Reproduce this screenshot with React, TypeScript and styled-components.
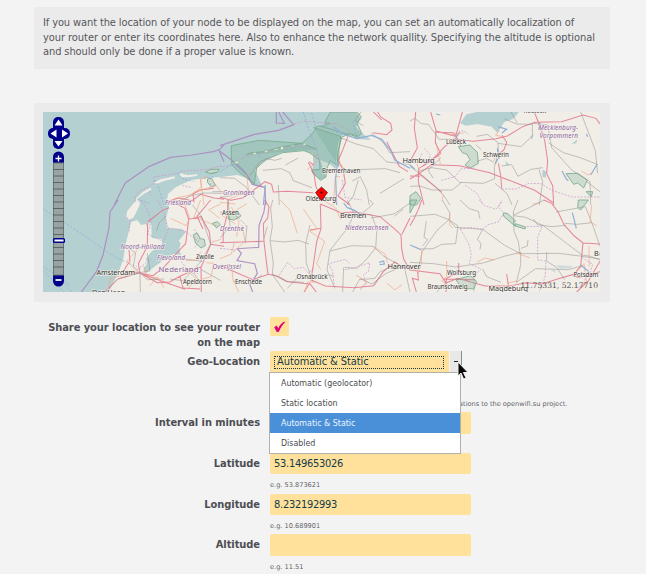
import React from "react";
import styled, { createGlobalStyle } from "styled-components";

const GlobalStyle = createGlobalStyle`
  * { box-sizing: border-box; }
  html, body { margin: 0; padding: 0; background: #f3f3f3; }
  body { width: 646px; height: 574px; overflow: hidden; color: #4d4e53;
    font-family: "DejaVu Sans Condensed", "DejaVu Sans", sans-serif; font-stretch: condensed; }
`;

const Page = styled.main`
  display: flex; flex-direction: column; width: 646px; height: 574px; padding: 7px 36px 0 34px; overflow: hidden;
`;
const Notice = styled.p`
  flex: none; margin: 0; height: 62px; padding: 9px 9px; background: #ebebeb; color: #56575b;
  font-size: 11px; line-height: 14.6px; white-space: nowrap;
`;
const NoticeLine = styled.span<{ $spacing?: number }>`
  display: block; letter-spacing: ${p => p.$spacing ?? -0.06}px;
`;
const MapPanel = styled.section`
  flex: none; margin-top: 34px; height: 199px; padding: 9px; background: #ebebeb;
`;
const MapCanvas = styled.svg` display: block; width: 557px; height: 180px; `;
const Form = styled.form` flex: none; margin-top: 15px; display: flex; flex-direction: column; `;
const Row = styled.div<{ $height: number }>`
  flex: none; display: grid; grid-template-columns: 226px 1fr; column-gap: 10px; height: ${p => p.$height}px;
`;
const Label = styled.label`
  padding-top: 3px; text-align: right; font-weight: bold; font-size: 11px; line-height: 15px;
  letter-spacing: -0.06px; white-space: nowrap;
`;
const Field = styled.div` position: relative; display: flex; flex-direction: column; `;
const Check = styled.div`
  width: 19px; height: 19px; border-radius: 2px; background: #ffe19b; display: grid; place-items: center;
`;
const Input = styled.div<{ $height?: number }>`
  width: 201px; height: ${p => p.$height ?? 21}px; border-radius: 2px; background: #ffe19b;
  padding-left: 4px; color: #123b49; font-size: 11px; line-height: 21px; letter-spacing: -0.28px;
`;
const Hint = styled.span<{ $top?: number; $left?: number }>`
  margin: ${p => p.$top ?? 7}px 0 0 ${p => p.$left ?? 0}px; font-family: "DejaVu Sans", sans-serif;
  font-stretch: normal; font-size: 6.6px; line-height: 9px; color: #626367; white-space: nowrap;
`;
const Select = styled.div` display: flex; width: 192px; height: 21px; gap: 1px; `;
const SelectValue = styled.div`
  width: 179px; background: #ffe19b; border-radius: 2px 0 0 0; padding: 5px 5px 3px 4px;
`;
const FocusText = styled.div`
  height: 13px; border: 1px dotted #123b49; padding-left: 2px; font-size: 11px; letter-spacing: -0.08px;
  line-height: 10px; color: #123b49; white-space: nowrap;
`;
const SelectButton = styled.div`
  width: 12px; background: #e8e8e8; border-right: 1px solid #8d8d8d; display: flex; align-items: center; padding-left: 4px;
  &::before { content: ""; width: 4px; height: 1px; background: #222; }
`;
const Menu = styled.ul`
  position: absolute; z-index: 2; left: -1px; top: 21px; width: 192px; height: 82px; margin: 0; padding: 0;
  border: 1px solid #b1b1ab; background: white; list-style: none;
`;
const Option = styled.li<{ $selected?: boolean }>`
  height: 20px; padding-left: 11px; font-size: 8.8px; line-height: 20px;
  color: ${p => (p.$selected ? "#edf5fc" : "#4b4c50")}; background: ${p => (p.$selected ? "#4a90d9" : "transparent")};
`;
const Cursor = styled.svg` position: absolute; z-index: 3; left: 186px; top: 10px; `;

type Frame = { x: number; y: number; children: React.ReactNode };
const Tile = ({ x, y, children }: Frame) => <g transform={`translate(${x} ${y}) scale(.33333)`}>{children}</g>;

const Red = styled.path` fill: none; stroke: #e4748b; stroke-width: 3.1; opacity: .85; `;
const Gray = styled.path` fill: none; stroke: #8e8b89; stroke-width: 2; opacity: .75; `;
const Orange = styled.path` fill: none; stroke: #efa583; stroke-width: 2.6; opacity: .75; `;
const Border = styled.path` fill: none; stroke: #a98bc1; stroke-width: 3.6; opacity: .9; `;
const Dashed = styled.path` fill: none; stroke: #c896cc; stroke-width: 2.7; stroke-dasharray: 6 4; opacity: .8; `;
const Ferry = styled.path` fill: none; stroke: #869fe0; stroke-width: 2.5; stroke-dasharray: 6 5; opacity: .75; `;
const Water = styled.path` fill: #b5d0d0; `;
const Stream = styled.path` fill: none; stroke: #91afd5; stroke-width: 3.6; `;
const Land = styled.path` fill: #f1eee8; `;
const Reserve = styled.path` fill: #70aa90; fill-opacity: .27; stroke: #79ad8d; stroke-width: 2.6; `;
const Place = styled.text<{ $size?: number }>`
  font-family: "Noto Sans", sans-serif; font-stretch: normal; font-size: ${p => p.$size ?? 6.3}px; fill: #363636;
  stroke: #f5f2ec; stroke-width: 1.3px; paint-order: stroke; stroke-opacity: .75;
`;
const Region = styled(Place)` fill: #8c63a1; font-style: italic; `;
const Country = styled(Place)` fill: #8c63a1; `;
const Coordinates = styled.text` font-family: "DejaVu Serif", serif; font-stretch: normal; font-size: 7.6px; fill: #505050; `;

const places: [string, number, number, number, number][] = [
  ["Oldenburg", 305.5, 201.4, 30.5, 6.3], ["Bremerhaven", 322, 172.7, 38.5, 6.3],
  ["Hamburg", 402.5, 162.8, 32, 7.5], ["Lübeck", 446, 144.2, 20, 6.3], ["Schwerin", 483, 156.5, 26, 6.3],
  ["Rostock", 523.5, 113, 22.5, 6.3], ["Assen", 222, 214.5, 17, 6.3], ["Zwolle", 196, 258.5, 18, 6.3],
  ["Amsterdam", 96.5, 274.7, 38.5, 7.3], ["Den Haag", 92, 294.7, 33, 7.3], ["Apeldoorn", 183, 284, 29, 6.3],
  ["Enschede", 235, 283.5, 27, 6.3], ["Osnabrück", 296.5, 279.3, 31, 6.3], ["Bremen", 340, 217.5, 26.5, 7.5],
  ["Hannover", 387.5, 269.2, 33, 7.5], ["Wolfsburg", 447, 275, 29, 6.3], ["Braunschweig", 427.5, 289, 40, 6.3],
  ["Magdeburg", 488.5, 290.7, 39.5, 7.3], ["Potsdam", 573.5, 276.6, 25, 6.3], ["Berlin", 594, 256, 23, 7.3],
];
const regions: [string, number, number, number, number][] = [
  ["Groningen", 223, 195, 31.5, 6.5], ["Friesland", 165, 204.5, 26, 6.5], ["Drenthe", 220, 231.3, 24, 6.5],
  ["Noord-Holland", 120.5, 248.9, 44, 6.5], ["Flevoland", 157, 259.6, 28, 6.5], ["Overijssel", 212.5, 268.8, 28.5, 6.5],
  ["Niedersachsen", 345, 229.8, 43.5, 6.5], ["Mecklenburg-", 538.5, 129.7, 39.5, 6.5], ["Vorpommern", 539.5, 138.2, 38.5, 6.5],
];

const RegionMap = () => (
  <MapCanvas viewBox="43 112 557 180" role="img" aria-label="Map">
    <rect x="43" y="112" width="557" height="180" fill="#b5d0d0" />
    <Land d="M109 292L119 271 123 260 126 243 131 222 137 220 141 225 146 224 149 238 161 240 163 243 151 252 146 259 149 268 160 263 165 253 181 255 177 243 186 232 181 229 167 228 166 218 169 207 167 200 168 194 176 187 191 180 207 178 221 177 237 175 247 178 253 185 263 188 258 177 255 170 260 164 269 159 280 153 303 150 313 154 313 164 312 173 320 180 326 177 323 168 320 160 328 163 337 170 336 162 338 143 342 135 350 134 357 139 371 140 362 133 356 127 361 119 356 112H600V292Z" />
    <Tile x={34} y={100}>
      <Land d="M302 315L307 294 327 275 350 263 352 270 330 281 314 293ZM360 248L380 238 422 229 423 235 390 243 367 252ZM438 220L460 225 490 223 489 228 461 232 439 231ZM520 212L556 208 557 212 523 219Z" />
      <Reserve d="M515 216L530 208 556 208 550 217 530 221ZM520 237L533 235 545 257 532 260 521 248Z" />
      <Border d="M241 315L258 280 274 249 346 199 410 172 474 165 538 155 558 148 570 134M554 149L570 185" />
      <Dashed d="M302 315L304 289 318 273 361 250 358 231 432 220 436 214 518 209 556 198 570 201M346 272L349 286M445 256L475 263" />
      <Ferry d="M310 298L345 310M362 240L374 262 390 315M430 219L448 238 480 244M529 250L527 270M510 235L540 230" />
      <Red d="M395 305L435 294 474 302 500 283 540 294 570 298M480 307L477 282 499 270 540 265" />
      <Orange d="M415 315L422 295 474 284 501 262 500 238 522 230M450 302L480 276 540 259M500 238L510 315M535 240L560 275" />
      <Gray d="M400 308L442 300 472 287 510 279 565 280M535 275L570 275" />
    </Tile>
    <Tile x={220} y={100}>
      <Reserve d="M34 137L118 121 246 130 278 100 290 79 310 78 330 70 313 69 331 36H412L424 51 411 68 425 100 416 108 388 101 365 112 353 161 352 196 330 182 321 205 318 231 302 241 278 219 275 210 300 208 299 181 270 159 252 152 188 158 139 178 110 204 103 252 53 213 34 192Z" />
      <Reserve d="M280 82L363 110 357 145 356 200M302 79L420 113M36 183L68 208 102 254M78 165L90 159 133 155 180 142 245 130 291 148" />
      <Border d="M0 137L103 103 176 91 221 74 188 36M169 36V69L193 70 176 36M0 154L50 192 80 222 96 253 135 262 137 315" />
      <Dashed d="M214 75L250 64 356 72 390 94M0 199L34 197 54 180 89 166 246 136 286 151" />
      <Ferry d="M250 36L267 92 291 147 300 204M275 40L291 92M0 215L39 192 75 218M310 74L365 105M398 64L410 108M118 172L120 155" />
      <Red d="M473 36L482 51 512 70 516 90 500 104 460 98M385 106L370 145 355 181 370 212 376 250 354 288 390 315M265 187L282 221 287 257 303 295M0 292L33 301 70 293 135 245 155 253 160 276 200 274 280 278M280 195L268 185M500 125L538 199 564 215M460 36L485 60" />
      <Orange d="M260 210L288 188 288 160M80 222L85 268 65 284M340 315L346 230 360 230M26 298L91 270M0 307L46 312M359 190L374 206" />
      <Gray d="M0 233L44 235 80 263 118 315M90 226L120 185 140 176 165 181 185 175M129 211L184 206 209 218 220 242 276 263M196 195L235 174M360 112L405 131 460 146 500 186 570 193M453 98L490 128 509 158 570 155M409 209L496 206 540 218M397 243L421 230 440 270 448 315M380 315L400 288 415 240M480 280L552 236M175 255L178 315M0 292L37 287M423 36L404 61 430 77" />
      <Stream d="M340 80L368 101 410 116 455 106 485 118 511 151 525 181 570 205M353 186L347 235 350 315M136 255L130 315" />
      <Dashed d="M367 240L375 292 425 300" />
      <g fill="#e2ead9" stroke="#8bb599" strokeWidth="2"><path d="M42 185l12-2 5 5-12 4zM96 161l8-4 8 4-7 4zM133 153l12-3-2 7-10 1zM160 149l16-5-3 6-13 3zM181 141l9-3 1 10-9 3zM212 136l11-1-3 7zM248 131l9-3 2 6-8 3z" /></g>
    </Tile>
    <Tile x={410} y={100}>
      <Water d="M150 70L169 43 200 36H327L309 57 282 67 263 99 245 80 202 72 168 77Z" />
      <Water d="M398 209L410 215 407 233 397 230ZM485 132L502 118 499 130ZM361 110L371 103 366 119ZM287 183L298 194 288 196Z" />
      <Stream d="M152 139L139 110 149 98M256 191L263 177M262 145L267 177M456 213L469 237 475 242M542 225L560 195M15 208L0 195M78 42L91 45M529 102L533 110M264 80L290 88 276 99M390 68L386 90" />
      <Reserve d="M145 140L180 135 202 157 205 190 181 204 165 195 180 179 171 163 157 158ZM468 221L503 220 532 240 521 264 503 249 491 253ZM0 287L18 275 33 295 20 315H0ZM528 275L548 275 544 290Z" />
      <Red d="M17 36L13 84 22 144 0 184M62 36L78 91 76 128 92 160 61 185 27 205M157 36L137 109 80 94M140 110L129 98 75 97M139 113L104 140 75 171 36 199M137 118L190 124 258 116 292 108 338 80 375 67 455 65 519 45 558 55 570 72M373 36L386 69 404 121 413 183 410 221 428 257 431 315M0 237L25 222 65 194 147 197 191 207 239 218 311 246 374 271 431 309M265 190L272 225 275 265M276 106L290 127 282 149 268 162M26 205L25 246 42 315M26 220L96 277M0 228L30 229" />
      <Gray d="M0 63L14 55 35 71 55 73 88 118 140 118M200 109L232 103 264 128 265 161 253 200 254 236 220 250 149 247 110 210 65 203 30 212M264 130L333 140 367 108 367 73 320 72 284 57M201 184L230 175 251 187M303 36L321 68M369 70L413 75 425 143 485 210 540 245 542 315M416 129L460 158 513 174 564 194M512 36L556 152 563 220M387 208L398 245 388 315M275 198L305 194 324 229 363 208 398 203M255 250L291 281 306 315M0 199L42 230 83 266 105 292 120 315M0 259L29 258 66 270 127 270 155 247M93 173L54 211 70 235M529 244L570 275M197 134L214 149" />
      <Orange d="M78 128L91 192M119 105L162 98M278 110L257 106 267 91M251 183L256 174M101 283L95 303M19 187L29 216M514 213L533 225 548 218M367 313L387 308" />
      <Dashed d="M36 160L27 178 55 185 61 165 42 144M94 241L135 230 153 207 195 204M166 256L202 281 219 315M275 267L320 267 357 250 393 251 425 271 486 291 570 291M135 99L158 92 174 101" />
    </Tile>
    <Tile x={34} y={200}>
      <Land d="M277 49L280 33 300 8 313 0 318 12 309 32 298 53 283 61Z" />
      <Water d="M340 77L365 70 397 81 394 98 424 110 440 130 434 155 395 173 357 204 333 220 328 207 350 175 379 149 384 127 367 111 348 100Z" />
      <Land d="M365 208L381 187 413 180 458 182 484 195 446 213 403 220ZM340 66L352 72 353 113 382 117 385 129 355 130 336 110Z" />
      <Border d="M252 0L228 36 225 84 207 165 188 214 142 276" />
      <Ferry d="M26 25L145 103 242 171 308 200M26 199L66 224 113 275M26 211L90 276M66 222L110 258" />
      <Dashed d="M320 0L337 23 351 65 341 102 389 125 403 87 390 40 371 0M279 53L288 60 285 99M403 84L451 92 493 124M481 88L498 112 483 143M442 185L461 210 491 220M309 209L352 177" />
      <Red d="M341 68L340 139 313 191 318 219 269 212 288 182 285 150M341 66L385 31 405 23M318 218L250 238 213 276M318 219L370 248 407 246 438 229 502 200 530 133 526 95 501 50 464 58 455 131 431 156 390 201 357 227 316 219M464 58L453 25 416 6M530 133L570 139M530 0L489 49 507 87M501 200L502 276M438 230L447 264 499 267M318 219L380 242 453 268" />
      <Gray d="M285 145L305 159 298 199 318 218 340 239 391 237M252 236L318 218 319 276M340 160L348 213 316 218M368 92L376 67 395 49M475 15L502 48 530 133 499 187 447 242 408 237M451 177L505 184M446 208L481 221 499 248M500 208L559 241" />
      <Orange d="M316 144L278 183 310 216 230 235 220 276M329 199L340 230 372 233 390 263M370 230L347 258M410 55L457 77 467 55 448 0M500 0L480 51 550 79M500 155L488 180 457 182M560 12L524 29 557 55M517 188L538 190 532 230 490 241M454 206L487 237 463 265M530 128L561 118" />
      <Reserve d="M478 104L489 99 499 116 511 118 514 137 501 144 485 130ZM535 70L550 65 559 74 548 84Z" />
    </Tile>
    <Tile x={220} y={200}>
      <Red d="M0 128L130 124M24 0L22 42 10 90 9 128M134 0L147 20 143 54 130 71 132 125 139 184 144 222M301 13L303 86 290 125 282 182 273 240 316 258 402 263 461 257 490 215 524 186 557 207M301 12L363 38 404 36 480 50 522 85 543 105 545 146 551 177 570 211M546 103L570 54M0 196L45 216 99 239 145 223 174 229 202 245 269 252M252 276L269 250 289 276M303 85L270 90" />
      <Gray d="M25 0L30 80 0 114M158 0L152 25 157 80 150 120 160 189 157 223M156 222L198 244 252 247M157 223L194 276M151 122L192 126 235 121 267 132M270 75L257 131 259 190 278 245M404 39L383 84 330 151 321 210 345 265M330 153L395 137 459 139 492 169 540 196M319 223L341 228M374 202L410 205 438 180 467 143 471 87 454 44 410 42M368 276L371 202M398 276L420 236 456 252 497 221 552 197 570 276M454 54L522 42 570 9M421 239L465 235 478 217 512 200M202 265L241 224 275 236M81 77L76 130M142 80L132 115M100 245L125 225M40 243L92 253M400 37L382 0M422 44L460 12 450 0M550 27L523 49" />
      <Border d="M137 0L132 35 117 77 116 142 52 146 64 160 51 182 104 191 112 220 90 255 98 276" />
      <Orange d="M34 21L57 65 50 110M0 176L34 162 44 124M181 0L210 31 232 100M250 27L292 87 268 93 314 124 290 191 303 209M310 0L347 24 362 59M460 139L495 162 503 188M66 76L75 123 40 157M35 201L39 240 56 276M255 276L263 246 292 246M408 226L442 245 420 265M500 249L525 270 546 254M80 11L39 37M0 42L46 72" />
      <Dashed d="M0 36L46 43 83 82M0 145L45 150M178 225L203 187 223 206 250 202 265 220 285 202M342 253L337 212 326 191 375 178 388 190M374 209L397 205 449 188 446 214 430 225 438 253 420 269" />
      <Stream d="M477 187l14-4 2 9-14 2M371 10L382 23 404 31 427 48" />
      <Reserve d="M25 35L57 40 63 48 42 60 25 57Z" />
    </Tile>
    <Tile x={410} y={200}>
      <Red d="M0 210L90 221 108 249 143 235 225 258 300 258 348 248 397 252 440 238 488 224 504 233 570 215M23 213L25 240 7 235 19 276M35 0L25 29 12 56 0 77M401 0L425 10 444 35 462 74 493 108 519 129 570 132M519 129L512 198 489 226M146 189L146 214 109 236 108 276M570 184L535 243 500 276M290 222L296 262M100 237L195 239" />
      <Gray d="M24 210L37 154 81 91 117 59 120 40 97 0M0 49L75 43 117 59 136 82 218 88 284 136 332 161 445 160 510 168 570 177M118 60L144 78 137 131 96 133 69 146 36 147M218 89L202 118 213 131 210 148M150 0L178 26 205 34 210 56M0 187L70 191 137 201 220 189 282 169 332 157 332 195 319 248M330 160L325 125 312 94 310 35 324 0M311 45L358 23 402 0M311 47L347 52 400 77 470 130 516 165 541 169 570 180M370 57L382 74 426 80 467 76M438 36L526 20 546 69 570 139M546 68L501 73 464 70M410 157L410 184 440 202 464 239M319 247L377 206 475 209 517 197M354 120L352 138 333 145M49 63L42 112 53 119 38 138M109 247L80 276M218 207L230 230 273 247" />
      <Orange d="M119 40L119 75 129 85M35 144L34 190 25 220M318 158L360 174M545 16L540 65 560 77M110 183L110 230 95 242 113 256M252 180L225 174 200 187M500 215L522 191 529 245 504 264M320 243L291 250M537 138L538 200" />
      <Dashed d="M208 0L224 17 258 28 276 5M218 88L234 74 265 66 281 39 265 20 276 0M150 86L182 82 216 88M151 87L176 131 184 163 178 191 213 207 192 229 192 276M350 80L397 79 383 110 383 180 408 183 405 232 388 276M515 172L548 193 540 220 523 241" />
      <Reserve d="M281 39L292 40 317 63 310 68 316 79 280 48ZM316 71L347 81 345 87 316 78ZM138 239L181 227 200 244 192 267 154 264ZM505 0L535 0 512 30 503 22ZM0 0L21 0 0 39Z" />
      <Stream d="M487 38L499 85M0 135L33 149M512 195L537 215" />
      <Water d="M423 211l14-5-2 12zM439 196l50 2-10 7-29 1z" opacity=".6" />
    </Tile>
    {places.map(([name, x, y, width, size]) => <Place key={name} x={x} y={y} textLength={width} $size={size}>{name}</Place>)}
    {regions.map(([name, x, y, width, size]) => <Region key={name} x={x} y={y} textLength={width} $size={size}>{name}</Region>)}
    <Country x="158.5" y="272.3" textLength="40" $size={7.8}>Nederland</Country>
    <Coordinates x="520.5" y="288.3" textLength="77.5">11.75331, 52.17710</Coordinates>

    <path d="M321.5 187l6 5.5-6 8.3-6-8.3z" fill="#f00" stroke="#300" strokeWidth=".6" />
    <circle cx="321.5" cy="192.5" r="1" fill="#111" />
    <g fill="#00008b">
      <rect x="53" y="117" width="11" height="32" rx="5" /><rect x="48" y="128" width="22" height="11" rx="5" />
      <path d="M53 163v-6a5 5 0 0 1 11 0v6zM53 275h11v6a5 5 0 0 1-11 0z" />
    </g>
    <path d="M54.5 125.5l4-6 4 6zM54.5 141l4 5.5 4-5.5zM56.5 129.5l-6 4 6 4zM62 129.5l6 4-6 4z" fill="#fff" />
    <path d="M55.5 158.5h6M58.5 155.5v6" stroke="#fff" strokeWidth="1.3" />
    <rect x="55.5" y="279" width="6" height="2" fill="#dfe3ef" />
    <rect x="53.5" y="163" width="10" height="112" fill="#98a4a3" stroke="#6c7776" />
    <path d="M53 169.5h11m-11 6.5h11m-11 6.5h11m-11 6.5h11m-11 6.5h11m-11 6.5h11m-11 6.5h11m-11 6.5h11m-11 6.5h11m-11 6.5h11m-11 6.5h11m-11 13h11m-11 6.5h11m-11 6.5h11m-11 6.5h11" stroke="#4b5656" strokeWidth=".8" />
    <rect x="53.7" y="238.7" width="10.6" height="3.6" rx=".8" fill="#fff" stroke="#00008b" strokeWidth="1.5" />
  </MapCanvas>
);

export default function App() {
  return (
    <>
      <GlobalStyle />
      <Page>
        <Notice>
          <NoticeLine $spacing={-0.115}>If you want the location of your node to be displayed on the map, you can set an automatically localization of</NoticeLine>
          <NoticeLine>your router or enter its coordinates here. Also to enhance the network quallity. Specifying the altitude is optional</NoticeLine>
          <NoticeLine $spacing={-0.1}>and should only be done if a proper value is known.</NoticeLine>
        </Notice>
        <MapPanel><RegionMap /></MapPanel>
        <Form>
          <Row $height={34}>
            <Label>Share your location to see your router<br />on the map</Label>
            <Field><Check><svg width="13" height="12" viewBox="0 0 13 12"><path d="M1.2 6.2L3.7 4.6l1.6 2.6C6.7 4.2 8.7 1.7 11.2.8l1.2.2C9.7 3.6 7.6 6.5 6 10.7L3.7 11Z" fill="#e20074" /></svg></Check></Field>
          </Row>
          <Row $height={61}>
            <Label>Geo-Location</Label>
            <Field>
              <Select><SelectValue><FocusText>Automatic &amp; Static</FocusText></SelectValue><SelectButton /></Select>
              <Hint $top={28} $left={189}>ations to the openwifi.su project.</Hint>
              <Menu>
                <Option>Automatic (geolocator)</Option><Option>Static location</Option>
                <Option $selected>Automatic &amp; Static</Option><Option>Disabled</Option>
              </Menu>
              <Cursor width="14" height="20" viewBox="0 0 14 20"><path d="M2 1V15l3-3 2.6 6 2.5-1L7.4 11.5H12Z" fill="#080808" stroke="#eee" strokeWidth="1" /></Cursor>
            </Field>
          </Row>
          <Row $height={41}><Label>Interval in minutes</Label><Field><Input $height={22} /></Field></Row>
          <Row $height={41}><Label>Latitude</Label><Field><Input>53.149653026</Input><Hint>e.g. 53.873621</Hint></Field></Row>
          <Row $height={40}><Label>Longitude</Label><Field><Input>8.232192993</Input><Hint>e.g. 10.689901</Hint></Field></Row>
          <Row $height={40}><Label>Altitude</Label><Field><Input $height={22} /><Hint>e.g. 11.51</Hint></Field></Row>
        </Form>
      </Page>
    </>
  );
}
